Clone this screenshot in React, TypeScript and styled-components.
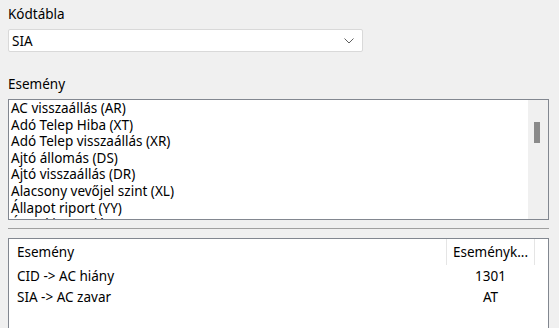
import styled, { createGlobalStyle } from "styled-components";

const GlobalStyle = createGlobalStyle`
	html, body {
		margin: 0;
		padding: 0;
		background: #f0f0f0;
	}
	body {
		font-family: "Noto Sans", "Segoe UI", sans-serif;
		font-size: 13.5px;
		color: #000;
	}
`;

const Page = styled.div`
	width: 559px;
	height: 328px;
	overflow: hidden;
	box-sizing: border-box;
	padding: 4px 10px 0 8px;
	display: flex;
	flex-direction: column;
`;

const Label = styled.div<{ $top?: number }>`
	height: 20px;
	line-height: 20px;
	margin-top: ${(p) => p.$top ?? 0}px;
	margin-bottom: 5px;
`;

const Combo = styled.div`
	width: 355px;
	height: 23px;
	box-sizing: border-box;
	background: #fff;
	border: 1px solid #d9d9d9;
	border-radius: 2px;
	display: flex;
	align-items: center;
	justify-content: space-between;
	padding: 0 8px 0 3px;
`;

const ListBox = styled.div`
	height: 121px;
	box-sizing: border-box;
	background: #fff;
	border: 1px solid #828790;
	display: flex;
	overflow: hidden;
`;

const Items = styled.div`
	flex: 1;
	padding: 0 0 0 2px;
`;

const Item = styled.div`
	height: 16.6px;
	line-height: 16.6px;
	white-space: nowrap;
`;

const ScrollTrack = styled.div`
	width: 20px;
	background: #f0f0f0;
	position: relative;
`;

const ScrollThumb = styled.div`
	position: absolute;
	left: 6px;
	top: 22px;
	width: 6px;
	height: 21px;
	background: #8a8a8a;
`;

const Separator = styled.div`
	height: 1px;
	background: #a0a0a0;
	margin: 8px 0 9px 0;
`;

const ListView = styled.div`
	flex: 1;
	box-sizing: border-box;
	background: #fff;
	border: 1px solid #828790;
	border-bottom: none;
`;

const Row = styled.div<{ $height: number }>`
	display: flex;
	height: ${(p) => p.$height}px;
	align-items: center;
`;

const NameCell = styled.div<{ $header?: boolean }>`
	width: 438px;
	height: 100%;
	box-sizing: border-box;
	padding-left: 8px;
	display: flex;
	align-items: center;
	border-right: 1px solid ${(p) => (p.$header ? "#e5e5e5" : "transparent")};
`;

const CodeCell = styled.div<{ $header?: boolean }>`
	width: 88px;
	height: 100%;
	box-sizing: border-box;
	display: flex;
	align-items: center;
	justify-content: center;
	border-right: 1px solid ${(p) => (p.$header ? "#e5e5e5" : "transparent")};
	white-space: nowrap;
`;

const Chevron = () => (
	<svg width="10" height="6" viewBox="0 0 10 6">
		<path d="M0.5 0.5 L5 5 L9.5 0.5" fill="none" stroke="#5f5f5f" strokeWidth="1" />
	</svg>
);

const events = [
	"AC visszaállás (AR)",
	"Adó Telep Hiba (XT)",
	"Adó Telep visszaállás (XR)",
	"Ajtó állomás (DS)",
	"Ajtó visszaállás (DR)",
	"Alacsony vevőjel szint (XL)",
	"Állapot riport (YY)",
	"Áramkimaradás (AT)",
];

const mappings = [
	{ name: "CID -> AC hiány", code: "1301" },
	{ name: "SIA -> AC zavar", code: "AT" },
];

const App = () => {
	return (
		<Page>
			<GlobalStyle />
			<Label>Kódtábla</Label>
			<Combo>
				<span>SIA</span>
				<Chevron />
			</Combo>
			<Label $top={22}>Esemény</Label>
			<ListBox>
				<Items>
					{events.map((e) => (
						<Item key={e}>{e}</Item>
					))}
				</Items>
				<ScrollTrack>
					<ScrollThumb />
				</ScrollTrack>
			</ListBox>
			<Separator />
			<ListView>
				<Row $height={26}>
					<NameCell $header>Esemény</NameCell>
					<CodeCell $header>Eseményk...</CodeCell>
				</Row>
				{mappings.map((m) => (
					<Row key={m.name} $height={21}>
						<NameCell>{m.name}</NameCell>
						<CodeCell>{m.code}</CodeCell>
					</Row>
				))}
			</ListView>
		</Page>
	);
};

export default App;
